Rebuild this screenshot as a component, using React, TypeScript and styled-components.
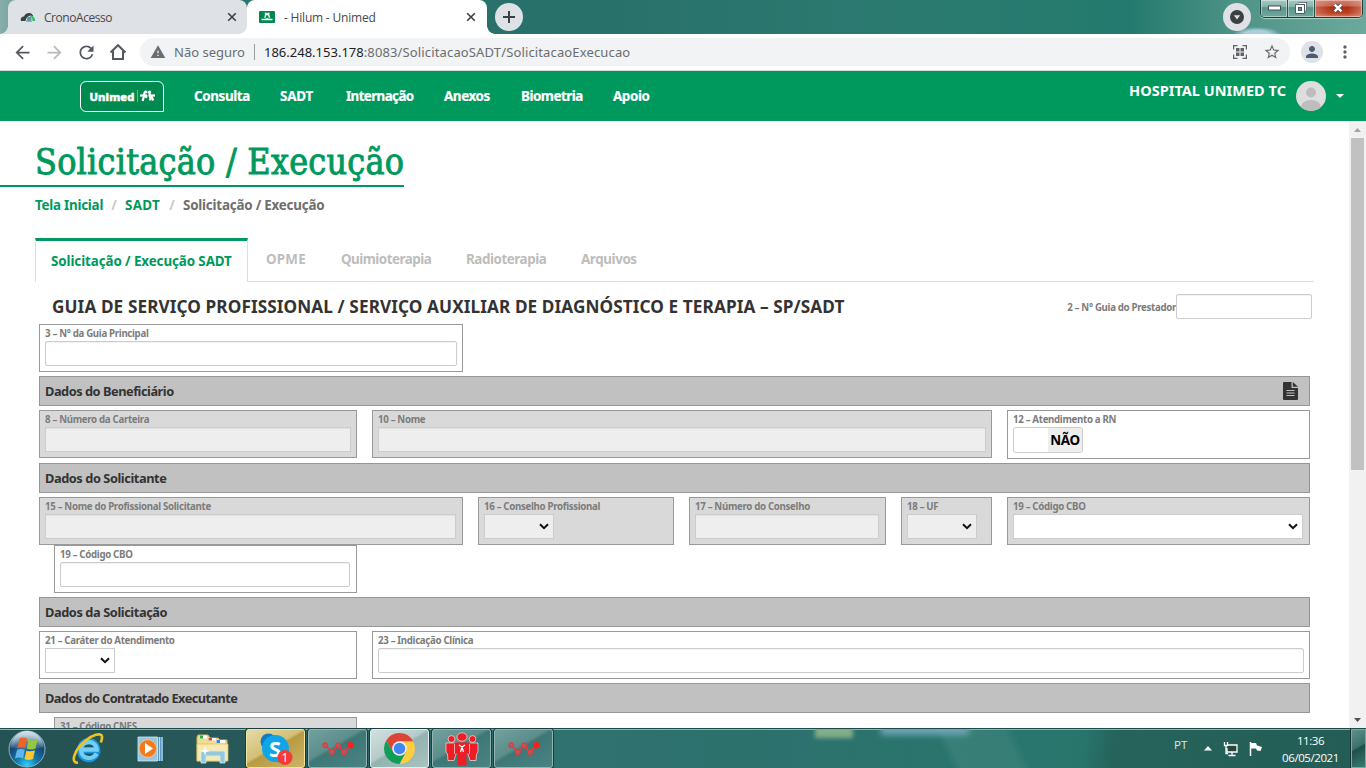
import React from 'react';
import styled, { createGlobalStyle, css } from 'styled-components';
import { MdArrowBack, MdArrowForward, MdRefresh, MdWarning, MdStarBorder, MdPerson, MdMoreVert } from 'react-icons/md';

const GREEN = '#00995d';

const Global = createGlobalStyle`
  * { box-sizing: border-box; }
  body { margin: 0; overflow: hidden; background: #fff; }
`;

const Desktop = styled.div`
  width: 1366px;
  height: 768px;
  display: flex;
  flex-direction: column;
  overflow: hidden;
  font-family: 'Noto Sans', 'Open Sans', sans-serif;
  svg { display: block; flex: none; }
`;

/* ---------- browser frame ---------- */

const TabStrip = styled.div`
  height: 34px;
  flex: none;
  display: flex;
  padding-left: 8px;
  position: relative;
  background:
    radial-gradient(ellipse 24px 7px at 1257px 34px, #a9cfe0 50%, transparent),
    linear-gradient(90deg, #86aeaa 0, #6f9f9a 20px, #2c746d 240px, #28706a 560px, #2b7a70 900px, #247a6e 1130px, #4f9487 1240px, #6ca99d 1366px);
`;

const BrowserTab = styled.div<{ $active?: boolean }>`
  position: relative;
  width: 239px;
  height: 34px;
  display: flex;
  align-items: center;
  padding: 0 10px 0 12px;
  background: ${p => (p.$active ? '#fff' : '#dee1e6')};
  border-radius: 8px 8px 0 0;
  font: 400 12px 'Open Sans', sans-serif;
  letter-spacing: ${p => (p.$active ? '-0.2px' : '-0.45px')};
  color: #45494d;
  ${p => p.$active && css`width: 240px; padding-left: 12px; padding-right: 11px;`}
  &::before, &::after {
    content: '';
    position: absolute;
    bottom: 0;
    width: 8px;
    height: 8px;
  }
  &::before {
    left: -8px;
    background: radial-gradient(circle at 0 0, transparent 7.5px, ${p => (p.$active ? '#fff' : '#dee1e6')} 8px);
  }
  &::after {
    right: -8px;
    background: radial-gradient(circle at 100% 0, transparent 7.5px, ${p => (p.$active ? '#fff' : '#dee1e6')} 8px);
  }
`;

const TabLabel = styled.span<{ $gap: number }>`
  margin-left: ${p => p.$gap}px;
  flex: 1;
  white-space: pre;
`;

const RoundButton = styled.div<{ $size?: number }>`
  width: ${p => p.$size ?? 28}px;
  height: ${p => p.$size ?? 28}px;
  border-radius: 50%;
  background: #dee1e6;
  display: flex;
  align-items: center;
  justify-content: center;
`;

const NewTab = styled(RoundButton)`
  margin: 3px 0 0 8px;
`;

const StripRight = styled.div`
  margin-left: auto;
  display: flex;
  align-items: flex-start;
  padding-right: 3px;
  gap: 9px;
`;

const Controls = styled.div`
  display: flex;
  width: 103px;
  height: 18px;
  border: 1px solid #1d3f3b;
  border-top: 0;
  border-radius: 0 0 5px 5px;
  box-shadow: 0 1px 1px #a9d3ca;
  overflow: hidden;
`;

const Control = styled.div<{ $w: number; $close?: boolean }>`
  width: ${p => p.$w}px;
  display: flex;
  align-items: center;
  justify-content: center;
  padding-bottom: 1px;
  box-shadow: inset 0 0 0 1px rgba(255, 255, 255, 0.4);
  border-right: ${p => (p.$close ? '0' : '1px solid #2b524d')};
  background: ${p =>
    p.$close
      ? 'linear-gradient(90deg, rgba(225,170,155,.45), transparent 35%, transparent 70%, rgba(225,170,155,.5)), linear-gradient(#d3806d 0, #c5634d 35%, #ad2e14 42%, #b93f20 75%, #d8785a)'
      : 'linear-gradient(#a5cac3 0, #84b3aa 40%, #5b9489 45%, #6fa99e 100%)'};
`;

const Toolbar = styled.div`
  height: 37px;
  flex: none;
  display: flex;
  align-items: center;
  padding: 0 11px;
  border-bottom: 1px solid #d5d8dc;
  color: #5f6368;
`;

const NavButton = styled.div<{ $off?: boolean }>`
  width: 32px;
  height: 32px;
  flex: none;
  display: flex;
  align-items: center;
  justify-content: center;
  color: ${p => (p.$off ? '#bababa' : '#55595d')};
  &:first-child { margin-left: -5px; }
`;

const Omnibox = styled.div`
  width: 1150px;
  height: 28px;
  margin-left: 6px;
  border-radius: 14px;
  background: #f1f3f4;
  display: flex;
  align-items: center;
  padding: 0 10px;
  font: 400 13px 'Noto Sans', sans-serif;
  color: #6a6e72;
`;

const Insecure = styled.span`margin-left: 8px; width: 80px; white-space: nowrap;`;
const Divider = styled.span`width: 1px; height: 16px; background: #9a9da1; margin-right: 9px;`;
const Host = styled.span`color: #202124; `;
const Path = styled.span`letter-spacing: 0.14px; flex: 1;`;
const BoxActions = styled.div`display: flex; gap: 16px; align-items: center; margin-right: -1px;`;
const Profile = styled(RoundButton)`margin: 0 0 0 11px; color: #4e5a70; flex: none;`;
const More = styled.div`margin-left: 12px; width: 20px; height: 20px;`;

/* ---------- site header ---------- */

const SiteHeader = styled.header`
  height: 50px;
  flex: none;
  background: ${GREEN};
  display: flex;
  align-items: center;
  padding: 0 22px 0 80px;
  color: #fff;
  font-weight: 700;
`;

const Logo = styled.div`
  width: 84px;
  height: 31px;
  border: 1px solid #fff;
  border-radius: 6px 6px 0 6px;
  background: #008a50;
  display: flex;
  align-items: center;
  justify-content: center;
  gap: 2px;
  font: 800 11.2px 'Noto Sans', sans-serif;
  letter-spacing: 0.15px;
  -webkit-text-stroke: 0.5px #fff;
`;

const LogoBar = styled.span`width: 1px; height: 12px; background: #62b892;`;

const Nav = styled.nav`
  display: flex;
  gap: 30px;
  margin-left: 30px;
  flex: 1;
  font-size: 13.4px;
  -webkit-text-stroke: 0.2px #fff;
`;

const NavItem = styled.a<{ $w: number; $ls: number }>`
  width: ${p => p.$w}px;
  letter-spacing: ${p => p.$ls}px;
  white-space: nowrap;
`;

const UserName = styled.span`
  font-size: 14.5px;
  letter-spacing: 0.03px;
  margin: -12px 10px 0 0;
`;

const Caret = styled.span`
  margin-left: 10px;
  border: 4px solid transparent;
  border-top-color: #fff;
  border-bottom: 0;
`;

/* ---------- page ---------- */

const Viewport = styled.div`
  height: 607px;
  flex: none;
  display: flex;
  overflow: hidden;
`;

const Page = styled.main`
  width: 1349px;
  height: 607px;
  overflow: hidden;
  display: flex;
  flex-direction: column;
`;

const Title = styled.h1`
  margin: 0;
  width: 404px;
  height: 66px;
  flex: none;
  padding: 20px 0 0 35px;
  border-bottom: 2px solid ${GREEN};
  color: ${GREEN};
  font: 400 35.5px/42px 'DejaVu Serif Condensed', 'DejaVu Serif', serif;
  font-stretch: condensed;
  -webkit-text-stroke: 0.9px ${GREEN};
  letter-spacing: 0.26px;
  white-space: nowrap;
`;

const Crumbs = styled.div`
  height: 37px;
  flex: none;
  display: flex;
  align-items: center;
  padding: 0 0 1px 35px;
  gap: 8px;
  font-size: 13.4px;
  font-weight: 700;
  letter-spacing: -0.22px;
`;
const CrumbLink = styled.a<{ $w: number; $ls: number }>`
  width: ${p => p.$w}px;
  color: ${GREEN};
  letter-spacing: ${p => p.$ls}px;
  white-space: nowrap;
`;
const CrumbSep = styled.span`color: #c9c9c9; width: 6px; text-align: center;`;
const CrumbHere = styled.span`color: #6f6f6f;`;

const FormTabs = styled.div`
  display: flex;
  height: 44px;
  flex: none;
  margin: 14px 35px 0 35px;
  border-bottom: 1px solid #ddd;
  font-size: 13.4px;
  font-weight: 700;
`;

const ActiveFormTab = styled.div`
  width: 213px;
  height: 44px;
  border: 1px solid #ddd;
  border-top: 3px solid ${GREEN};
  border-bottom: 0;
  background: #fff;
  color: ${GREEN};
  line-height: 40px;
  padding-left: 15px;
  letter-spacing: -0.1px;
  white-space: nowrap;
`;

const FormTab = styled.div<{ $w: number; $ls: number }>`
  width: ${p => p.$w}px;
  margin-left: 18px;
  margin-right: 16px;
  color: #bdbdbd;
  line-height: 42px;
  letter-spacing: ${p => p.$ls}px;
  white-space: nowrap;
`;

const FormHead = styled.div`
  display: flex;
  align-items: center;
  height: 25px;
  flex: none;
  margin: 12px 37px 0 52px;
`;

const FormTitle = styled.h2`
  margin: 0;
  flex: 1;
  font: 700 17.2px/25px 'Noto Sans', sans-serif;
  letter-spacing: 0.09px;
  color: #333;
  white-space: nowrap;
`;

const Form = styled.div`
  width: 1271px;
  margin: 5px 0 0 39px;
  display: flex;
  flex-direction: column;
  gap: 4px;
`;

const Section = styled.div<{ $ls?: number }>`
  height: 30px;
  flex: none;
  display: flex;
  align-items: center;
  justify-content: space-between;
  padding: 0 11px 0 5px;
  background: #c1c1c1;
  border: 1px solid #969696;
  color: #333;
  font-size: 12.8px;
  font-weight: 700;
  letter-spacing: ${p => p.$ls ?? -0.48}px;
`;

const Row = styled.div<{ $tight?: boolean; $indent?: boolean; $h?: number }>`
  display: flex;
  gap: 15px;
  height: ${p => p.$h ?? 48}px;
  flex: none;
  margin-top: ${p => (p.$tight ? -4 : 0)}px;
  padding-left: ${p => (p.$indent ? 15 : 0)}px;
`;

const Field = styled.div<{ $w: number; $muted?: boolean; $tall?: boolean }>`
  width: ${p => p.$w}px;
  height: ${p => (p.$tall ? 49 : 48)}px;
  flex: none;
  padding: 0 5px;
  border: 1px solid #999;
  background: ${p => (p.$muted ? '#d9d9d9' : '#fff')};
`;

const Label = styled.label`
  display: block;
  height: 16px;
  line-height: 17px;
  font-size: 9.7px;
  font-weight: 700;
  letter-spacing: -0.32px;
  color: #7c7c7c;
  white-space: nowrap;
`;

const Input = styled.div<{ $w?: number; $off?: boolean; $select?: boolean }>`
  width: ${p => (p.$w ? p.$w + 'px' : '100%')};
  height: 25px;
  border: 1px solid #ccc;
  border-radius: ${p => (p.$off || p.$select ? 0 : 2)}px;
  background: ${p => (p.$off ? '#eee' : '#fff')};
  box-shadow: ${p => (p.$select ? 'none' : 'inset 0 1px 1px rgba(0, 0, 0, 0.06)')};
  display: flex;
  align-items: center;
  justify-content: flex-end;
  padding-right: 4px;
`;

const Toggle = styled.div`
  width: 70px;
  height: 26px;
  border: 1px solid #ccc;
  border-radius: 3px;
  display: flex;
  overflow: hidden;
`;
const ToggleOff = styled.span`
  margin-left: 34px;
  flex: 1;
  background: #eee;
  color: #000;
  font: 700 13.4px/24px 'Noto Sans', sans-serif;
  text-align: center;
  letter-spacing: -0.3px;
`;

const ScrollBar = styled.div`
  width: 17px;
  background: #f1f1f1;
  display: flex;
  flex-direction: column;
  align-items: center;
`;
const ScrollArrow = styled.div`height: 17px; display: flex; align-items: center;`;
const Thumb = styled.div`width: 13px; height: 332px; background: #c1c1c1; margin-bottom: auto;`;

/* ---------- taskbar ---------- */

const Taskbar = styled.div`
  height: 40px;
  flex: none;
  display: flex;
  border-top: 1px solid #1d4b4b;
  box-shadow: inset 0 1px 0 #8fb5b3;
  background:
    linear-gradient(100deg, transparent 240px, rgba(30, 80, 75, 0) 1070px, rgba(30, 70, 65, 0.35) 1100px),
    linear-gradient(65deg, transparent 862px, rgba(110, 165, 155, 0.22) 872px, rgba(110, 165, 155, 0.18) 925px, transparent 935px),
    linear-gradient(90deg, #245152 0, #28595a 240px, #2f7270 560px, #2d716d 760px, #28766d 1060px, #2a7268 1160px, #26685f 1366px);
`;

/* windows glimpsed through the translucent bar */
const Glass = styled.div`
  flex: 1;
  height: 39px;
  position: relative;
  overflow: hidden;
  &::before {
    content: '';
    position: absolute;
    left: 259px;
    top: -4px;
    width: 38px;
    height: 13px;
    background: #82ae88;
    filter: blur(2px);
  }
  &::after {
    content: '';
    position: absolute;
    left: 325px;
    top: -6px;
    width: 88px;
    height: 12px;
    background: #6fa5b4;
    filter: blur(3px);
  }
`;

const Launch = styled.div<{ $w: number }>`
  width: ${p => p.$w}px;
  display: flex;
  align-items: center;
  justify-content: center;
`;

const TaskButton = styled.div<{ $tone?: 'gold' | 'light' }>`
  width: 59px;
  height: 39px;
  margin-right: 3px;
  border: 1px solid ${p => (p.$tone === 'gold' ? '#f3e3a0' : p.$tone === 'light' ? '#e3efee' : '#93b5b4')};
  border-radius: 3px;
  box-shadow: 0 0 0 1px #183f3f;
  display: flex;
  align-items: center;
  justify-content: center;
  background: ${p =>
    p.$tone === 'gold'
      ? 'linear-gradient(150deg, #e5dba8 0, #d3c078 45%, #b89a45 50%, #cdb566 100%)'
      : p.$tone === 'light'
      ? 'linear-gradient(150deg, #d3e0df 0, #b5cbca 45%, #93b2b0 50%, #a9c3c1 100%)'
      : 'linear-gradient(150deg, #73a09e 0, #5c8e8c 42%, #3e7876 48%, #4a8381 100%)'};
`;

const Tray = styled.div`
  display: flex;
  color: #fff;
  font: 400 11.5px 'Open Sans', sans-serif;
`;
const Lang = styled.span`width: 30px; padding-top: 8px; font-size: 11.5px; color: #dbe8e6;`;
const TrayIcons = styled.div`display: flex; align-items: center; gap: 11px; padding-left: 0;`;
const Clock = styled.div`
  width: 80px;
  margin-left: 8px;
  padding: 3px 1px 0 0;
  text-align: center;
  line-height: 17px;
  letter-spacing: -0.42px;
`;
const ShowDesktop = styled.div`
  width: 15px;
  border: 1px solid #7da8a3;
  box-shadow: -1px 0 0 #14332f;
  background: linear-gradient(150deg, #5e8f89 0, #3c716b 45%, #1f4f49 50%, #3a7a72 100%);
`;

/* ---------- icons ---------- */

const Cross = () => (
  <svg width="10" height="10" viewBox="0 0 10 10"><path d="M1.2 1.2l7.6 7.6M8.8 1.2l-7.6 7.6" stroke="#3c4043" strokeWidth="1.6" /></svg>
);

const CronoIcon = () => (
  <svg width="16" height="16" viewBox="0 0 16 16">
    <path d="M1 12C0 9 2 7.5 4 7.500C5 4.500 9 3 12 5L13.500 7.500C10 6 6.500 7 5.500 12Z" fill="#3b4345" />
    <path d="M9 6.500C13 6 15.500 9 15 12H12.500C12.500 9.500 11.500 8 9 6.500Z" fill="#2fbf71" />
    <circle cx="9.200" cy="10" r="2.300" fill="#6f86b8" />
    <path d="M6 12.200H12" stroke="#49c68a" strokeWidth="1.200" />
  </svg>
);

const HilumIcon = () => (
  <svg width="16" height="12" viewBox="0 0 16 12">
    <rect width="16" height="12" rx="1" fill="#00894f" />
    <circle cx="6.800" cy="2.700" r="1.100" fill="#fff" />
    <circle cx="9.500" cy="2.700" r="1.100" fill="#fff" />
    <path d="M5.800 6.800L6.800 3.500H9.500L10.500 6.800" stroke="#fff" strokeWidth="1.300" fill="none" />
    <path d="M2.500 7.800H6L8 7L10 7.800H13.500V9.300H2.500Z" fill="#fff" />
  </svg>
);

const UnimedMark = () => (
  <svg width="15" height="12" viewBox="0 0 15 12">
    <g stroke="#fff" strokeWidth="2.200" fill="none">
      <path d="M5.800 1.500C4 1.500 4.200 4 3.700 7L2.600 11" /><path d="M0 5.500H7" />
      <path d="M6.500 5L6 8" />
      <path d="M9.500 1.500C9.500 6 10.500 6 10.300 10.500" /><path d="M8.500 5.500H15" /><path d="M11 5.500L13.200 10.500" />
    </g>
    <circle cx="6" cy="2" r="1.600" fill="#fff" /><circle cx="9.600" cy="2" r="1.600" fill="#fff" />
  </svg>
);

const QrIcon = () => (
  <svg width="14" height="14" viewBox="0 0 14 14" fill="none" stroke="#5f6368" strokeWidth="1.200">
    <path d="M.6 4.500V.6H4.500M9.500 .6H13.400V4.500M13.400 9.500V13.400H9.500M4.500 13.400H.6V9.500" />
    <path d="M3 3H6.500V6.500H3ZM7.500 3H11V6.500H7.500ZM3 7.500H6.500V11H3ZM7.500 7.500H11V11H7.500Z" fill="#5f6368" stroke="none" />
  </svg>
);

const Chevron = () => (
  <svg width="10" height="7" viewBox="0 0 10 7"><path d="M1 1.200L5 5.200L9 1.200" stroke="#111" strokeWidth="2" fill="none" /></svg>
);

const Avatar = () => (
  <svg width="30" height="30" viewBox="0 0 30 30">
    <defs><clipPath id="face"><circle cx="15" cy="15" r="15" /></clipPath></defs>
    <g clipPath="url(#face)"><rect width="30" height="30" fill="#dedede" /><circle cx="15" cy="11.500" r="5" fill="#bdbdbd" /><ellipse cx="15" cy="26" rx="10" ry="7" fill="#bdbdbd" /></g>
  </svg>
);

const FileIcon = () => (
  <svg width="15" height="18" viewBox="0 0 15 18">
    <path d="M1 0H8.500V6H15V17Q15 18 14 18H1Q0 18 0 17V1Q0 0 1 0Z" fill="#333" /><path d="M9.800 0L15 4.800H9.800Z" fill="#333" />
    <path d="M3.500 8.500H11.500M3.500 11H11.500M3.500 13.500H11.500" stroke="#c1c1c1" strokeWidth="1.200" />
  </svg>
);

const StartOrb = () => (
  <svg width="38" height="38" viewBox="0 0 38 38">
    <defs>
      <radialGradient id="orb" cx="50%" cy="95%" r="85%"><stop offset="0" stopColor="#2bd3ff" /><stop offset=".35" stopColor="#1478ad" /><stop offset=".75" stopColor="#16466f" /><stop offset="1" stopColor="#6f9cb5" /></radialGradient>
      <linearGradient id="shine" x1="0" y1="0" x2="0" y2="1"><stop offset="0" stopColor="#fff" stopOpacity=".7" /><stop offset="1" stopColor="#fff" stopOpacity=".08" /></linearGradient>
    </defs>
    <circle cx="19" cy="19" r="18" fill="url(#orb)" stroke="#8cb0bf" strokeWidth="1" />
    <path d="M3 17A16 16 0 0 1 35 17Q19 22 3 17Z" fill="url(#shine)" />
    <path d="M11.500 8.500Q15 6.500 19 8.500L17.300 18Q13.500 16.300 9.500 18Z" fill="#ee6427" />
    <path d="M20.500 9.200Q25 11.500 29.500 9.500L27.500 18.500Q23 20.500 18.800 18.500Z" fill="#94c83e" />
    <path d="M9 19.800Q13 18 16.800 19.800L15 28.500Q11.500 26.500 7 28.500Z" fill="#5fb6ec" />
    <path d="M18.400 20.500Q22 22.300 27 20.300L25 29Q20.500 31 16.500 29Z" fill="#fdc72f" />
  </svg>
);

const IeIcon = () => (
  <svg width="32" height="32" viewBox="0 0 32 32">
    <path d="M25 20.500C22 28.500 8 28.500 8.200 17C8.500 5 25 5 25.300 17.300H10" fill="none" stroke="#1c93dc" strokeWidth="6.200" />
    <path d="M24.700 20.500C21.500 27 9 27 9 17C9.200 6.500 24.500 6.500 24.700 16.700H10.500" fill="none" stroke="#72cff8" strokeWidth="4.200" />
    <path d="M6 29.500C-2 31 2 17 13 8C20 2 29.500 -1 30 3.500C30.200 6 29.500 8 28.800 9.500" fill="none" stroke="#f2c21f" strokeWidth="2.600" />
  </svg>
);

const PlayerIcon = () => (
  <svg width="27" height="26" viewBox="0 0 27 26">
    <path d="M8 1H26V25H8Z" fill="#5f98bd" /><path d="M22.500 1V25M25 1V25" stroke="#b9dcf0" />
    <path d="M1 1H20.500V25H1Z" fill="#9cc6de" stroke="#d1e8f3" strokeWidth=".8" />
    <circle cx="10.800" cy="12.500" r="8.700" fill="#f27a1d" stroke="#ffd0a0" strokeWidth=".6" /><path d="M8 7L16 12.500L8 18Z" fill="#fff" />
  </svg>
);

const FolderIcon = () => (
  <svg width="33" height="30" viewBox="0 0 33 30">
    <path d="M2 1H12L14 4H22L24 6H31V27H1V3Z" fill="#f2dc8e" stroke="#d3b257" />
    <path d="M4 1.500H11V4.500H4Z" fill="#fff" /><path d="M4 1.500H7V4.500H4Z" fill="#29ad45" /><path d="M12 4H20V6.500H12Z" fill="#fff" /><path d="M12.500 4H16V6.500H12.500Z" fill="#d94730" /><path d="M20 6H29V9H20Z" fill="#fff" /><path d="M20.500 6H24V9H20.500Z" fill="#3c86d7" />
    <path d="M1 10H32V27H1Z" fill="#f8e9ae" stroke="#d9bd68" strokeWidth=".7" />
    <path d="M5 19Q5 17 7 17H27Q29 17 29 19V29H24V22H10V29H5Z" fill="#94c9dc" stroke="#d0ecf5" strokeWidth=".8" />
    <path d="M9 12L10 16L14 17L10 18L9 22L8 18L4 17L8 16Z" fill="#fff" />
  </svg>
);

const SkypeIcon = () => (
  <svg width="34" height="34" viewBox="0 0 34 34">
    <circle cx="9.500" cy="9.500" r="8" fill="#0c7fc4" /><circle cx="21.500" cy="22.500" r="8" fill="#0c8fd0" /><circle cx="16.500" cy="16.500" r="13.500" fill="#10a5e8" />
    <text x="16" y="24.500" textAnchor="middle" fontFamily="Noto Sans" fontWeight="700" fontSize="22" fill="#fff">S</text>
    <circle cx="26" cy="25.500" r="7.500" fill="#f63b36" />
    <text x="26" y="30" textAnchor="middle" fontFamily="Open Sans" fontSize="12" fill="#fff">1</text>
  </svg>
);

const ZigzagIcon = () => (
  <svg width="32" height="14" viewBox="0 0 32 14" fill="none" stroke="#f5333a" strokeWidth="1.500">
    <path d="M3 3L10 10L16 3.500L22 10L29 3" />
    <g fill="#9a6a6a"><circle cx="3.300" cy="3.300" r="2.200" /><circle cx="9.800" cy="10" r="2.200" /><circle cx="16" cy="3.500" r="2.200" /><circle cx="22" cy="10" r="2.200" /></g>
    <circle cx="28.300" cy="3.300" r="2.500" fill="#ff1e1e" stroke="#ff1e1e" />
  </svg>
);

const ChromeIcon = () => (
  <svg width="31" height="31" viewBox="0 0 32 32">
    <path d="M16 8.500H30A16 16 0 0 1 16 32L22.500 19.800Z" fill="#ffcd40" />
    <path d="M2.144 8L9.500 19.700L16 16V8.500H30A16 16 0 0 0 2.144 8Z" fill="#db4437" />
    <path d="M2.144 8L9.500 19.700Q16 25 22.500 19.700L16 32A16 16 0 0 1 2.144 8Z" fill="#0f9d58" />
    <circle cx="16" cy="16" r="7.500" fill="#f1f1f1" /><circle cx="16" cy="16" r="5.900" fill="#4285f4" />
  </svg>
);

const PeopleIcon = () => (
  <svg width="34" height="34" viewBox="0 0 34 34">
    <g fill="#ee1c24" stroke="#fff" strokeWidth=".6">
      <circle cx="6.500" cy="7" r="3.400" /><circle cx="27.500" cy="7" r="3.400" />
      <path d="M1 11H11V22L9 28.500H3L2.500 22L1 20Z" /><path d="M33 11H23V22L25 28.500H31L31.500 22L33 20Z" />
      <ellipse cx="17" cy="5" rx="5" ry="4.200" />
    </g>
    <path d="M9.500 10.500H24.500V21.500H21.500V33.500H12.500V21.500H9.500Z" fill="#ee1c24" />
    <path d="M9.500 12V22M24.500 12V22" stroke="#fff" strokeWidth=".6" />
    <path d="M14 13L17 15L20 13M17 15L15.500 20M17 15L18.500 20" stroke="#fff" strokeWidth="1.200" fill="none" />
  </svg>
);

const TrayArrow = () => <svg width="8" height="5" viewBox="0 0 8 5"><path d="M4 0L8 4.500H0Z" fill="#fff" /></svg>;
const NetworkIcon = () => (
  <svg width="15" height="16" viewBox="0 0 15 16" fill="none" stroke="#fff" strokeWidth="1.300">
    <path d="M5 4H14V11H4V7" fill="#27443f" /><path d="M9 11V14M5.500 14.500H12.500" /><path d="M1.500 1V4.500H4.500V1M3 4.500V12.500H5" />
  </svg>
);
const FlagIcon = () => (
  <svg width="14" height="16" viewBox="0 0 14 16"><path d="M1.500 1V15" stroke="#fff" strokeWidth="1.500" /><path d="M2 2H7L8 4.500L13 6L11.500 10L8 9.500L7 7.500H2Z" fill="#fff" /></svg>
);

/* ---------- composition ---------- */

interface FieldSpec { label: string; w: number; muted?: boolean; select?: number; white?: boolean; inset?: number }

const FieldBox = ({ label, w, muted, select, white, inset }: FieldSpec) => (
  <Field $w={w} $muted={muted}>
    <Label>{label}</Label>
    <Input $w={select ?? w - 12 - (inset ?? 0)} $off={muted && !white} $select={!!select}>{select && <Chevron />}</Input>
  </Field>
);

const navItems: [string, number, number][] = [
  ['Consulta', 56, -0.37], ['SADT', 36, -0.2], ['Internação', 68, -0.62], ['Anexos', 47, -0.4], ['Biometria', 62, -0.47], ['Apoio', 40, -0.4],
];
const formTabs: [string, number, number][] = [['OPME', 41, 0.2], ['Quimioterapia', 91, -0.5], ['Radioterapia', 81, -0.45], ['Arquivos', 60, -0.4]];

export default function App() {
  return (
    <Desktop>
      <Global />
      <TabStrip>
        <BrowserTab><CronoIcon /><TabLabel $gap={8}>CronoAcesso</TabLabel><Cross /></BrowserTab>
        <BrowserTab $active><HilumIcon /><TabLabel $gap={9}>- Hilum - Unimed</TabLabel><Cross /></BrowserTab>
        <NewTab>
          <svg width="12" height="12" viewBox="0 0 12 12"><path d="M6 0V12M0 6H12" stroke="#3c4043" strokeWidth="2" /></svg>
        </NewTab>
        <StripRight>
          <NewTab>
            <svg width="14" height="14" viewBox="0 0 14 14"><circle cx="7" cy="7" r="7" fill="#3c4043" /><path d="M3.800 5.300H10.200L7 9.500Z" fill="#dee1e6" /></svg>
          </NewTab>
          <Controls>
            <Control $w={28}><svg width="13" height="6" viewBox="0 0 13 6"><rect x=".5" y="1" width="12" height="4" fill="#fff" stroke="#454b5a" /></svg></Control>
            <Control $w={27}>
              <svg width="12" height="12" viewBox="0 0 12 12" fill="none"><path d="M3.500 1.500H10.500V8.500" stroke="#454b5a" strokeWidth="3" /><path d="M3.500 1.500H10.500V8.500" stroke="#fff" strokeWidth="1.500" /><rect x="2" y="4" width="6" height="6" stroke="#454b5a" strokeWidth="3.500" /><rect x="2" y="4" width="6" height="6" stroke="#fff" strokeWidth="2" /></svg>
            </Control>
            <Control $w={48} $close><svg width="12" height="10" viewBox="0 0 14 12"><path d="M3 2L11 10M11 2L3 10" stroke="#454b5a" strokeWidth="5" /><path d="M3 2L11 10M11 2L3 10" stroke="#fff" strokeWidth="3" /></svg></Control>
          </Controls>
        </StripRight>
      </TabStrip>

      <Toolbar>
        <NavButton><MdArrowBack size={21} /></NavButton>
        <NavButton $off><MdArrowForward size={21} /></NavButton>
        <NavButton><MdRefresh size={21} /></NavButton>
        <NavButton>
          <svg width="18" height="18" viewBox="0 0 18 18"><path d="M1.500 9.500L9 2.200L16.500 9.500M4 8V16H14V8" stroke="currentColor" strokeWidth="2" fill="none" /></svg>
        </NavButton>
        <Omnibox>
          <MdWarning size={16} />
          <Insecure>Não seguro</Insecure>
          <Divider />
          <Host>186.248.153.178</Host>
          <Path>:8083/SolicitacaoSADT/SolicitacaoExecucao</Path>
          <BoxActions><QrIcon /><MdStarBorder size={18} /></BoxActions>
        </Omnibox>
        <Profile $size={22}><MdPerson size={18} /></Profile>
        <More><MdMoreVert size={20} /></More>
      </Toolbar>

      <SiteHeader>
        <Logo>Unimed<LogoBar /><UnimedMark /></Logo>
        <Nav>{navItems.map(([t, w, ls]) => <NavItem key={t} $w={w} $ls={ls}>{t}</NavItem>)}</Nav>
        <UserName>HOSPITAL UNIMED TC</UserName>
        <Avatar />
        <Caret />
      </SiteHeader>

      <Viewport>
        <Page>
          <Title>Solicitação / Execução</Title>
          <Crumbs>
            <CrumbLink $w={68} $ls={-0.25}>Tela Inicial</CrumbLink><CrumbSep>/</CrumbSep>
            <CrumbLink $w={36} $ls={0.3}>SADT</CrumbLink><CrumbSep>/</CrumbSep>
            <CrumbHere>Solicitação / Execução</CrumbHere>
          </Crumbs>
          <FormTabs>
            <ActiveFormTab>Solicitação / Execução SADT</ActiveFormTab>
            {formTabs.map(([t, w, ls]) => <FormTab key={t} $w={w} $ls={ls}>{t}</FormTab>)}
          </FormTabs>
          <FormHead>
            <FormTitle>GUIA DE SERVIÇO PROFISSIONAL / SERVIÇO AUXILIAR DE DIAGNÓSTICO E TERAPIA – SP/SADT</FormTitle>
            <Label>2 – N° Guia do Prestador</Label>
            <Input $w={136} />
          </FormHead>
          <Form>
            <Row><FieldBox label="3 – N° da Guia Principal" w={424} /></Row>
            <Section>Dados do Beneficiário<FileIcon /></Section>
            <Row $h={49}>
              <FieldBox label="8 – Número da Carteira" w={318} muted />
              <FieldBox label="10 – Nome" w={620} muted />
              <Field $w={303} $tall>
                <Label>12 – Atendimento a RN</Label>
                <Toggle><ToggleOff>NÃO</ToggleOff></Toggle>
              </Field>
            </Row>
            <Section $ls={-0.44}>Dados do Solicitante</Section>
            <Row>
              <FieldBox label="15 – Nome do Profissional Solicitante" w={424} muted inset={1} />
              <FieldBox label="16 – Conselho Profissional" w={196} muted select={70} />
              <FieldBox label="17 – Número do Conselho" w={197} muted inset={1} />
              <FieldBox label="18 – UF" w={91} muted select={70} />
              <FieldBox label="19 – Código CBO" w={303} muted white select={290} />
            </Row>
            <Row $tight $indent><FieldBox label="19 – Código CBO" w={303} inset={1} /></Row>
            <Section $ls={-0.42}>Dados da Solicitação</Section>
            <Row>
              <FieldBox label="21 – Caráter do Atendimento" w={318} select={70} />
              <FieldBox label="23 – Indicação Clínica" w={938} />
            </Row>
            <Section $ls={-0.58}>Dados do Contratado Executante</Section>
            <Row $indent><FieldBox label="31 – Código CNES" w={303} muted /></Row>
          </Form>
        </Page>
        <ScrollBar>
          <ScrollArrow><svg width="7" height="4" viewBox="0 0 7 4"><path d="M3.500 0L7 4H0Z" fill="#a3a3a3" /></svg></ScrollArrow>
          <Thumb />
          <ScrollArrow><svg width="7" height="4" viewBox="0 0 7 4"><path d="M3.500 4L7 0H0Z" fill="#505050" /></svg></ScrollArrow>
        </ScrollBar>
      </Viewport>

      <Taskbar>
        <Launch $w={54}><StartOrb /></Launch>
        <Launch $w={68}><IeIcon /></Launch>
        <Launch $w={56}><PlayerIcon /></Launch>
        <Launch $w={68}><FolderIcon /></Launch>
        <TaskButton $tone="gold"><SkypeIcon /></TaskButton>
        <TaskButton><ZigzagIcon /></TaskButton>
        <TaskButton $tone="light"><ChromeIcon /></TaskButton>
        <TaskButton><PeopleIcon /></TaskButton>
        <TaskButton><ZigzagIcon /></TaskButton>
        <Glass />
        <Tray>
          <Lang>PT</Lang>
          <TrayIcons><TrayArrow /><NetworkIcon /><FlagIcon /></TrayIcons>
          <Clock>11:36<br />06/05/2021</Clock>
          <ShowDesktop />
        </Tray>
      </Taskbar>
    </Desktop>
  );
}
